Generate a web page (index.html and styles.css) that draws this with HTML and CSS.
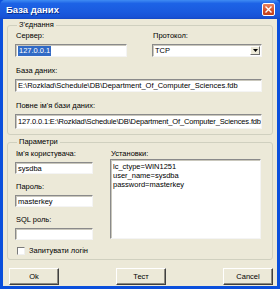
FILE: index.html
```html
<!DOCTYPE html>
<html lang="uk">
<head>
  <meta charset="UTF-8" />
  <title>База даних</title>
  <link rel="stylesheet" href="styles.css">
</head>
<body>
  <div class="window">
    <div class="titlebar">
      <span class="title">База даних</span>
      <span class="close">
        <svg width="7" height="7" viewBox="0 0 7 7"><path d="M0.5 0.5 L6.5 6.5 M6.5 0.5 L0.5 6.5" stroke="#fff" stroke-width="1.4" /></svg>
      </span>
    </div>

    <div class="client">
      <fieldset class="group conn">
        <legend>З'єднання</legend>
        <div class="pair">
          <div class="field">
            <label>Сервер:</label>
            <div class="edit"><span class="sel">127.0.0.1</span></div>
          </div>
          <div class="field">
            <label>Протокол:</label>
            <div class="combo">
              <span class="value">TCP</span>
              <span class="drop"><svg width="5" height="3" viewBox="0 0 5 3"><path d="M0 0 H5 L2.5 3 Z" fill="#000" /></svg></span>
            </div>
          </div>
        </div>
        <div class="field">
          <label>База даних:</label>
          <div class="edit">E:\Rozklad\Schedule\DB\Department_Of_Computer_Sciences.fdb</div>
        </div>
        <div class="field">
          <label>Повне ім'я бази даних:</label>
          <div class="edit tall">127.0.0.1:E:\Rozklad\Schedule\DB\Department_Of_Computer_Sciences.fdb</div>
        </div>
      </fieldset>

      <fieldset class="group params">
        <legend>Параметри</legend>
        <div class="cols">
          <div class="left">
            <div class="field">
              <label>Ім'я користувача:</label>
              <div class="edit">sysdba</div>
            </div>
            <div class="field">
              <label>Пароль:</label>
              <div class="edit">masterkey</div>
            </div>
            <div class="field">
              <label>SQL роль:</label>
              <div class="edit"></div>
            </div>
          </div>
          <div class="right">
            <label>Установки:</label>
            <div class="memo">lc_ctype=WIN1251
user_name=sysdba
password=masterkey</div>
          </div>
        </div>
        <div class="check">
          <span class="box"></span>
          <span>Запитувати логін</span>
        </div>
      </fieldset>

      <div class="buttons">
        <button type="button">Ok</button>
        <button type="button">Тест</button>
        <button type="button">Cancel</button>
      </div>
    </div>
  </div>
</body>
</html>
```

FILE: styles.css
```css
html, body {
  margin: 0;
  padding: 0;
}
body {
  font-family: "Liberation Sans", Arial, sans-serif;
  font-size: 7.5px;
  line-height: 10px;
  color: #000;
  background: #fff;
}
.window {
  width: 280px;
  height: 289px;
  box-sizing: border-box;
  display: flex;
  flex-direction: column;
  background: #0a4fdc;
  padding: 0 3px 3px 3px;
}
.titlebar {
  height: 19px;
  margin: 0 -3px;
  padding: 0 5px 0 6px;
  display: flex;
  align-items: center;
  justify-content: space-between;
  background: linear-gradient(to bottom, #3f8cf3 0%, #1d63e6 18%, #1a5bdf 60%, #1852d6 90%, #1448c4 100%);
  border-radius: 5px 5px 0 0;
}
.title {
  color: #fff;
  font-weight: bold;
  font-size: 9.5px;
  text-shadow: 1px 1px 0 #0c2f8a;
}
.close {
  width: 11px;
  height: 11px;
  display: flex;
  align-items: center;
  justify-content: center;
  border: 1px solid #fff;
  border-radius: 2px;
  background: linear-gradient(to bottom, #e9835f, #d2502a 60%, #c13e1a);
}
.client {
  flex: 1;
  background: #ece9d8;
  padding: 1px 4px 0 4px;
  display: flex;
  flex-direction: column;
}
.group {
  margin: 0;
  padding: 0 10px 0 7px;
  border: 1px solid #d0d0bf;
  border-radius: 3px;
  min-width: 0;
}
.group legend {
  padding: 0 2px;
  margin-left: 2px;
  line-height: 10px;
}
.conn {
  height: 115px;
  box-sizing: border-box;
}
.params {
  margin-top: 2px;
  height: 123px;
  box-sizing: border-box;
}
label {
  display: block;
  height: 10px;
  padding-left: 1px;
}
.field label {
  margin-bottom: 3px;
}
.pair {
  display: grid;
  grid-template-columns: 112px 110px;
  column-gap: 25px;
  margin-top: 1px;
}
.conn > .field {
  margin-top: 9px;
}
.edit, .combo, .memo {
  background: #fff;
  border: 1px solid;
  border-color: #8a8a8a #f4f4f4 #f4f4f4 #8a8a8a;
  box-shadow: inset 1px 1px 0 #c9c7bc;
  box-sizing: border-box;
  height: 13px;
  padding: 0 2px;
  line-height: 11px;
  white-space: nowrap;
  overflow: hidden;
}
.edit.tall {
  height: 15px;
  line-height: 13px;
  letter-spacing: -0.15px;
}
.sel {
  background: #316ac5;
  color: #fff;
  display: inline-block;
  padding: 0 1px;
  line-height: 10px;
}
.combo {
  display: flex;
  justify-content: space-between;
  align-items: center;
  padding-right: 1px;
}
.drop {
  width: 10px;
  height: 9px;
  box-sizing: border-box;
  display: flex;
  align-items: center;
  justify-content: center;
  background: #ece9d8;
  border: 1px solid;
  border-color: #fff #6e6e6e #6e6e6e #fff;
}
.cols {
  display: grid;
  grid-template-columns: 78px 151px;
  column-gap: 17px;
  margin-top: 2px;
}
.left .field + .field {
  margin-top: 8px;
}
.left .edit {
  height: 12px;
}
.right label {
  margin-bottom: 0;
}
.memo {
  height: 80px;
  white-space: pre;
  padding: 2px 2px;
  line-height: 9px;
}
.check {
  display: flex;
  align-items: center;
  gap: 4px;
  margin-top: 6px;
  padding-left: 2px;
}
.box {
  width: 8px;
  height: 8px;
  box-sizing: border-box;
  background: #fff;
  border: 1px solid;
  border-color: #7a7a7a #f0f0f0 #f0f0f0 #7a7a7a;
}
.buttons {
  display: flex;
  justify-content: space-between;
  padding: 0 0 0 2px;
  margin-top: 8px;
}
button {
  width: 50px;
  height: 17px;
  padding: 0;
  font-family: "Liberation Sans", Arial, sans-serif;
  font-size: 7.5px;
  color: #000;
  background: #ece9d8;
  border: 1px solid;
  border-color: #fff #404040 #404040 #fff;
  box-shadow: inset -1px -1px 0 #8c8a80;
}
```
